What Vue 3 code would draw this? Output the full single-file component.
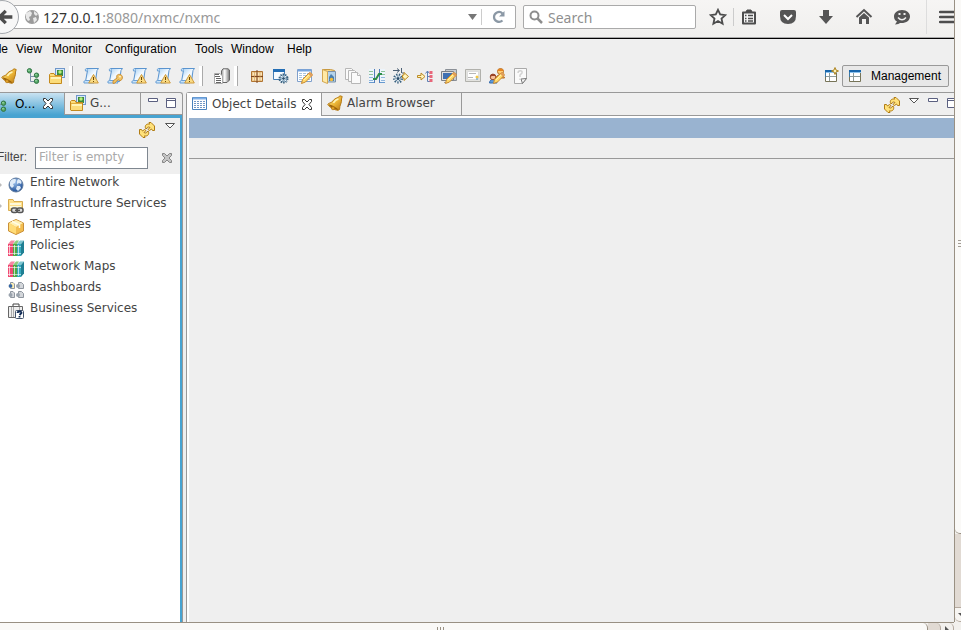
<script setup>
import { ref } from 'vue'

const address = ref('')
const filter = ref('')

const menus = ['View', 'Monitor', 'Configuration', 'Tools', 'Window', 'Help']

const toolGroups = [
  [
    { icon: 'bell', label: 'Alarms' },
    { icon: 'tree', label: 'Object browser' },
    { icon: 'folderpic', label: 'Graphs' }
  ],
  [
    { icon: 'scrollwarn', label: 'Event log' },
    { icon: 'scrollkey', label: 'Audit log' },
    { icon: 'scrollwarn', label: 'Syslog' },
    { icon: 'scrollwarn', label: 'Traps' },
    { icon: 'scrollwarn', label: 'Alarm log' }
  ],
  [{ icon: 'server', label: 'Server' }],
  [
    { icon: 'package', label: 'Packages' },
    { icon: 'windowgear', label: 'Server configuration' },
    { icon: 'tableedit', label: 'Events' },
    { icon: 'folderbook', label: 'Files' },
    { icon: 'copies', label: 'Templates' },
    { icon: 'mapping', label: 'Mapping tables' },
    { icon: 'process', label: 'Event processing' },
    { icon: 'import', label: 'Image library' },
    { icon: 'monitoredit', label: 'Object tools' },
    { icon: 'card', label: 'Certificates' },
    { icon: 'users', label: 'Users' },
    { icon: 'script', label: 'Scripts' }
  ]
]

const objects = [
  { icon: 'globe', label: 'Entire Network', expandable: true },
  { icon: 'infra', label: 'Infrastructure Services', expandable: true },
  { icon: 'box', label: 'Templates' },
  { icon: 'books', label: 'Policies' },
  { icon: 'books', label: 'Network Maps' },
  { icon: 'dash', label: 'Dashboards' },
  { icon: 'business', label: 'Business Services' }
]
</script>

<template>
  <svg class="defs" aria-hidden="true">
    <defs>
      <linearGradient id="gold" x1="0" y1="0" x2="1" y2="1">
        <stop offset="0" stop-color="#fff0a0" /><stop offset=".5" stop-color="#eeb93a" /><stop offset="1" stop-color="#b87410" />
      </linearGradient>
      <linearGradient id="paper" x1="0" y1="0" x2="1" y2="1">
        <stop offset="0" stop-color="#a5cff3" /><stop offset=".5" stop-color="#f4faff" /><stop offset="1" stop-color="#b9daf3" />
      </linearGradient>
      <linearGradient id="steel" x1="0" x2="1">
        <stop offset="0" stop-color="#999" /><stop offset=".4" stop-color="#fff" /><stop offset="1" stop-color="#777" />
      </linearGradient>
      <radialGradient id="ocean" cx=".4" cy=".3" r=".7">
        <stop offset="0" stop-color="#9fc4ee" /><stop offset="1" stop-color="#1f4f97" />
      </radialGradient>
    </defs>

    <symbol id="bell" viewBox="0 0 16 16">
      <path d="M13 .8 15.200 1.500 14.500 4 C15 8 12.500 10 12.500 14.500 L11 15.300 C7 15 2 12 .8 9.500 L1.500 8.500 C6 8 6 3.500 11 2.500Z" fill="url(#gold)" stroke="#b57a14" />
      <path d="M1.500 9.200 C4 9.500 10 12.500 11.500 14.800 C8 14.500 3 12.500 1.500 9.200Z" fill="#9a620b" />
      <path d="M6.500 8 C7.500 6 9 4.500 11.500 4" fill="none" stroke="#fff5b8" stroke-width="1.500" />
      <circle cx="6" cy="13.200" r="1.600" fill="#e0a32a" stroke="#a9690c" stroke-width=".6" />
    </symbol>
    <symbol id="tree" viewBox="0 0 16 16">
      <path d="M5.500 5V13.500H10M5.500 8.500H10" fill="none" stroke="#7d92a8" />
      <g fill="#55a868" stroke="#327545"><circle cx="4.500" cy="2.800" r="2.200" /><circle cx="11.500" cy="7.200" r="2.200" /><circle cx="11.500" cy="13.200" r="2.200" /></g>
      <g fill="#a9dfb2"><circle cx="4" cy="2.300" r=".8" /><circle cx="11" cy="6.700" r=".8" /><circle cx="11" cy="12.700" r=".8" /></g>
    </symbol>
    <symbol id="folderpic" viewBox="0 0 16 16">
      <rect x="6.500" y=".5" width="9" height="9" fill="#d7e8fa" stroke="#6f97ca" /><path d="M8 2H14V8H8Z" fill="#3b8a3b" /><circle cx="11" cy="4" r="1.700" fill="#b9f07c" />
      <path d="M.5 15V6.500L1.500 5.500H5L6 7.500H12.500V15.500H1Z" fill="#fbdc7a" stroke="#c48a1d" /><path d="M2 10H12" stroke="#fff4b7" stroke-width="2" /><path d="M1 8.500H12" stroke="#e0ad3d" />
    </symbol>
    <symbol id="sheet" viewBox="0 0 16 16">
      <path d="M3.500 .5H15.500L14 2.500 12.500 13.500H2.500L4.500 2.500Z" fill="url(#paper)" stroke="#5a94cf" />
      <path d="M3.500 .5Q1.500 1 2.500 3H4.500M2.500 12.500Q0 13 1 15H11Q9.500 13.500 11 12.500Z" fill="#c9e3f8" stroke="#6aa0d6" />
    </symbol>
    <symbol id="scrollwarn" viewBox="0 0 16 16">
      <use href="#sheet" /><path d="M10.500 6.500 15.300 15H5.700Z" fill="#f9dc86" stroke="#cf9a3c" stroke-linejoin="round" /><path d="M10.500 9V12M10.500 13V14" stroke="#704700" />
    </symbol>
    <symbol id="scrollkey" viewBox="0 0 16 16">
      <use href="#sheet" /><path d="M6 15.500 6 13 10 10 C9 7 11 6 13 6.500 16 7 16 11 14 12.300 12.500 13 11.500 12 11 11.500L8 15Z" fill="#f3c766" stroke="#c98f39" /><circle cx="13" cy="8.800" r=".8" fill="#fff" />
    </symbol>
    <symbol id="server" viewBox="0 0 16 16">
      <path d="M7.500 3 9 .8H14L15.500 2V12L13 14.500H7.500Z" fill="url(#steel)" stroke="#666" />
      <path d="M.5 5.500H6L8.500 8V15.500H.5Z" fill="#fff" stroke="#aaa" /><path d="M1 6.500H5M1 8.500H6M2 10.500H7M2 12.500H7M2 14.500H7" stroke="#666" />
    </symbol>
    <symbol id="package" viewBox="0 0 16 16">
      <path d="M2.500 3.500H13.500V13.500H2.500Z" fill="#efcd94" stroke="#b07432" /><path d="M8 2V15M2 8.500H14" stroke="#7d4520" /><path d="M4 6H7M9 6H13M4 11H7M9 11H13" stroke="#fbe6bd" stroke-width="2" /><path d="M5.500 4V13M11 4V13" stroke="#d3a05f" stroke-width=".7" />
    </symbol>
    <symbol id="windowgear" viewBox="0 0 16 16">
      <path d="M.5 1.500H11.500V11.500H.5Z" fill="#f7fbff" stroke="#477eb4" /><path d="M0 1H12V4H0Z" fill="#246eb5" />
      <circle cx="10.500" cy="10.500" r="4" fill="#9eb9cd" stroke="#39617f" stroke-dasharray="1.500 1" stroke-width="2" /><path d="M7.500 7.500 13.500 13.500M13.500 7.500 7.500 13.500" stroke="#e9f4fc" /><circle cx="10.500" cy="10.500" r="1.300" fill="#294c69" />
    </symbol>
    <symbol id="pencil" viewBox="0 0 16 16">
      <path d="M4.500 15.500 5.500 11.500 12 5 C13.500 4 16 6 15 7.500L8.500 14Z" fill="#ffd96c" stroke="#c98a30" /><path d="M7 12 12 7" stroke="#fff1ac" /><path d="M12 5 15 8" stroke="#e09a5c" stroke-width="2" />
    </symbol>
    <symbol id="tableedit" viewBox="0 0 16 16">
      <path d="M.5 1.500H14.500V13.500H.5Z" fill="#fff" stroke="#7fa0cc" /><path d="M1 2.500H14" stroke="#77a5de" stroke-width="2" /><path d="M2 5.500H13M2 7.500H13M2 9.500H13M2 11.500H13" stroke="#a9c3dd" stroke-dasharray="3 1" /><use href="#pencil" />
    </symbol>
    <symbol id="folderbook" viewBox="0 0 16 16">
      <path d="M1.500 1.500H9.500L13.500 2.500V13.500H1.500Z" fill="#f6d686" stroke="#c89941" /><path d="M6.500 3.500H14.500V14H6.500Z" fill="#b5d3ea" stroke="#7d92a8" /><path d="M1.500 1.500 6.500 3.500V15.500L1.500 13.500Z" fill="#ffe9a5" stroke="#d2a752" /><path d="M8 9 10 6 13 9V13H8Z" fill="#4a7fae" /><circle cx="10.500" cy="11.500" r="1.700" fill="#f7bd36" />
    </symbol>
    <symbol id="copies" viewBox="0 0 16 16">
      <g fill="#fafafa" stroke="#b7b7b7"><path d="M.5 .5H6.500L8.500 2.500V11.500H.5Z" /><path d="M3.500 2.500H9.500L11.500 4.500V13.500H3.500Z" /><path d="M6.500 4.500H12.500L15.500 7.500V15.500H6.500Z" /><path d="M12.500 4.500V7.500H15.500" /></g>
    </symbol>
    <symbol id="mapping" viewBox="0 0 16 16">
      <path d="M0 1H5V15H0ZM11 1H16V15H11Z" fill="#edf5fc" /><path d="M5.500 1V15M10.500 1V15" stroke="#517dba" /><path d="M0 3.500H4M0 6.500H4M12 3.500H16M12 6.500H16" stroke="#8fc39b" /><path d="M0 9.500H4M0 12.500H4M12 9.500H16M12 12.500H16" stroke="#92b7dd" /><path d="M0 14.500H5M11 14.500H16" stroke="#6799cf" /><path d="M4 11H7L10 6H13" fill="none" stroke="#2c8c49" stroke-width="2" />
    </symbol>
    <symbol id="process" viewBox="0 0 16 16">
      <path d="M0 2.500H6M4 .5 6.500 2.500 4 4.500M8.500 0V5M10 4V6" fill="none" stroke="#4c6074" /><circle cx="5" cy="10.500" r="3.500" fill="#f5fbff" stroke="#39617f" stroke-width="3" stroke-dasharray="1.200 1.200" /><circle cx="5" cy="10.500" r="1.500" fill="#294c69" /><path d="M9.500 7H11V4.500L15.500 8.500 11 12.500V10H9.500Z" fill="#fff4bd" stroke="#bc8b24" />
    </symbol>
    <symbol id="import" viewBox="0 0 16 16">
      <path d="M.5 7.500H4V5L8 8.500 4 12V9.500H.5Z" fill="#fff4bd" stroke="#bc8b24" /><path d="M10.500 3V13.500H13M8.500 5.500 10.500 3 12.500 5.500M10.500 8.500H13" fill="none" stroke="#5d82b4" /><path d="M12.500 3H15.500V6H12.500ZM12.500 7H15.500V10H12.500ZM12.500 11H15.500V14H12.500Z" fill="#e8667a" />
    </symbol>
    <symbol id="monitoredit" viewBox="0 0 16 16">
      <path d="M4.500 1.500H15.500V12.500H4.500Z" fill="#c7cbd0" stroke="#8b9097" /><path d="M.5 3.500H12.500V12.500H.5Z" fill="#e0e0e0" stroke="#7b8087" /><path d="M2 5H11V11H2Z" fill="#3f70b2" /><path d="M3 14.500H8" stroke="#999" /><use href="#pencil" />
    </symbol>
    <symbol id="card" viewBox="0 0 16 16">
      <path d="M.5 1.500H15.500V13.500H.5Z" fill="#e3e3df" stroke="#b1b1ac" /><path d="M2.500 3.500H13.500V11.500H2.500Z" fill="#fff" stroke="#ddd" /><path d="M4 5.500H11M3 9.500H8" stroke="#b7b7b7" /><circle cx="12" cy="9" r="1.500" fill="#f2c643" /><path d="M12 10V12" stroke="#4c9acc" />
    </symbol>
    <symbol id="users" viewBox="0 0 16 16">
      <path d="M7 10 C7 6 15 6 15.500 10Z" fill="#f2a445" stroke="#b46c24" /><circle cx="11.500" cy="3.500" r="3" fill="#ffcb73" stroke="#b46c24" /><path d="M8.500 3 C9 0 14 0 14.500 3Z" fill="#e78520" /><path d="M.5 15 C.5 10 8 10 8 15Z" fill="#5c9bdc" stroke="#376bab" /><circle cx="4" cy="9" r="2.800" fill="#f7bf9a" stroke="#974d28" /><path d="M1 9 C1 5 6 5 7 8L3 8Z" fill="#9b4429" /><use href="#pencil" />
    </symbol>
    <symbol id="script" viewBox="0 0 16 16">
      <path d="M1.500 .5H13.500V10.500L9.500 15.500H1.500Z" fill="#fafafa" stroke="#aaa" /><path d="M13.500 10.500 8 11 9.500 15.500Z" fill="#f5f5f5" stroke="#777" /><path d="M5 5 C5 2 10 2 9 5 L7 7V9M7 10.500V12" fill="none" stroke="#d2d2d2" stroke-width="1.500" />
    </symbol>
    <symbol id="globe" viewBox="0 0 16 16">
      <circle cx="8" cy="8" r="7" fill="url(#ocean)" stroke="#617c9e" /><path d="M2 5 C4 1 8 2 8 3L7 6 5 7 6 9 4 11 2 9ZM10 2 C14 3 14 6 13 7L11 6 9 7 9 4ZM9 9 12 9 13 11 10 14 8 12Z" fill="#e0ecf8" />
    </symbol>
    <symbol id="infra" viewBox="0 0 16 16">
      <path d="M.5 12.500V1.500H5L6 3.500H14.500V12.500Z" fill="#ffe08a" stroke="#d9ad50" /><path d="M2 6H13M2 9H13" stroke="#fff9d8" stroke-width="2" /><rect x="3.500" y="10" width="6" height="4.500" rx="2" fill="#ddd" stroke="#555" stroke-width="1.500" /><rect x="9" y="10" width="6" height="4.500" rx="2" fill="#ddd" stroke="#555" stroke-width="1.500" /><path d="M7 12.300H12" stroke="#555" stroke-width="1.500" />
    </symbol>
    <symbol id="box" viewBox="0 0 16 16">
      <path d="M8 .5 15.500 4V12L8 15.500 .5 12V4Z" fill="#f2bd50" stroke="#c99039" /><path d="M8 1 15 4 8 8 1 4Z" fill="#fff0b3" /><path d="M1 4 8 8V15L1 11.500Z" fill="#ffdc78" /><path d="M4 2.500 11.500 6V9" fill="none" stroke="#fffbe4" stroke-width="1.500" />
    </symbol>
    <symbol id="books" viewBox="0 0 16 16">
      <path d="M0 4 3 .5H7L5 4Z" fill="#f58aa4" /><path d="M0 4H5V16H0Z" fill="#f04a72" /><path d="M5 4 8 .5H11L9 4Z" fill="#8ccc7f" /><path d="M5 4H9V16H5Z" fill="#4fa843" /><path d="M9 4 12 .5H16L13 4Z" fill="#7fc6d2" /><path d="M9 4H13V16H9Z" fill="#35a9bd" /><path d="M13 4 16 .5V12.500L13 16Z" fill="#1f7f93" />
      <path d="M1.500 5V15M6.500 5V15M10.500 5V15" stroke="#fff" opacity=".65" /><path d="M0 6.500H13M0 13.500H13" stroke="#fff" opacity=".6" />
    </symbol>
    <symbol id="dash" viewBox="0 0 16 16">
      <g fill="#d3d6da" stroke="#8f969f"><path d="M2.500 .5H5L6.500 2V6.500H2.500ZM10.500 .5H13.500L15.500 2.500V6.500H10.500ZM2.500 9.500H5L6.500 11V15.500H2.500ZM10.500 9.500H13.500L15.500 11.500V15.500H10.500Z" /></g>
      <path d="M3 1H5L6 2.500V6H3Z" fill="#fff1b5" />
      <g fill="#9aa3ad"><circle cx="2.500" cy="4" r="2" /><circle cx="10" cy="4" r="2" /><circle cx="2.500" cy="13" r="2" /><circle cx="10" cy="13" r="2" /></g><circle cx="2.500" cy="4" r="1.700" fill="#3266a7" />
    </symbol>
    <symbol id="business" viewBox="0 0 16 16">
      <path d="M5 3V1H11V3" fill="none" stroke="#444" /><path d="M.5 3.500H14.500V14.500H.5Z" fill="#eee" stroke="#666" /><path d="M3.500 4V14M5.500 4V14M11.500 4V8" stroke="#aaa" /><rect x="7.500" y="7.500" width="8" height="8" rx="1" fill="#fff" stroke="#44546c" /><path d="M9.500 10 C9.500 8 14 8 13.500 10L11.500 12M11.500 13V14.500" fill="none" stroke="#122d58" stroke-width="1.800" />
    </symbol>
    <symbol id="details" viewBox="0 0 16 16">
      <path d="M.5 1.500H14.500V13.500H.5Z" fill="#fff" stroke="#4b83bd" /><path d="M1 2.500H14" stroke="#80b0e8" stroke-width="2" /><path d="M2 5.500H13M2 7.500H13M2 9.500H13M2 11.500H13" stroke="#7297c4" stroke-dasharray="2 1" />
    </symbol>
    <symbol id="refresh" viewBox="0 0 16 16">
      <path id="swirl" d="M6.500 6.500 C5.500 3 8 1.500 10.500 2.200L10 .5H12L15.500 4V8.500L13.500 8.500 12.500 7 10.500 8.500 9 7.500 11 5.500 C9.500 4.500 8 5 8 6.500Z" fill="#ffe27b" stroke="#b17c14" />
      <use href="#swirl" transform="rotate(180 8 8)" />
    </symbol>
    <symbol id="perspective" viewBox="0 0 14 14">
      <path d="M1.500 1.500H12.500V12.500H1.500Z" fill="#fff" stroke="#777458" /><path d="M1 2H13" stroke="#1766ad" stroke-width="2" /><path d="M1 3.500H13" stroke="#8fc3ee" /><path d="M5.500 4V12M1.500 7.500H12" stroke="#8e9b9b" /><path d="M1.500 3V8" stroke="#3d79a6" />
    </symbol>
    <symbol id="close" viewBox="0 0 12 12">
      <path d="M1.500 .5H3.500L6 3 8.500 .5H10.500V2.500L8 5.500 10.500 8.500V10.500H8.500L6 8 3.500 10.500H1.500V8.500L4 5.500 1.500 2.500Z" fill="#fff" stroke="currentColor" />
    </symbol>
    <symbol id="chevron" viewBox="0 0 10 6"><path d="M.5 .5H9.500L5 5Z" fill="#fff" stroke="#555" /></symbol>
    <symbol id="minimize" viewBox="0 0 10 4"><path d="M.5 .5H9.500V3.500H.5Z" fill="#fff" stroke="#5b6080" /></symbol>
    <symbol id="maximize" viewBox="0 0 10 10"><path d="M.5 .5H9.500V9.500H.5ZM.5 2.500H9.500" fill="#fff" stroke="#5b6080" /></symbol>
  </svg>

  <div class="page">
    <div class="main">
      <header class="browser">
        <button class="back" aria-label="Back"><svg viewBox="0 0 34 34"><path d="M28 17H15M21 10.500 14.500 17 21 23.500" fill="none" stroke="#4d4d4d" stroke-width="3.500" /></svg></button>
        <div class="address">
          <svg class="world" viewBox="0 0 16 16"><circle cx="8" cy="8" r="7" fill="#9b9b9b" /><path d="M2 4 6 2 8 4 7 7 5 8 6 11 4 12 2 9ZM10 2 14 5 12 7 10 5ZM9 9 12 8 13 11 10 14Z" fill="#e9e9e9" /></svg>
          <a class="url" href="#"><b>127.0.0.1</b>:8080/nxmc/nxmc</a>
          <button class="drop" aria-label="History"><svg width="9" height="6" viewBox="0 0 9 6"><path d="M0 0H9L4.500 6Z" fill="#777" /></svg></button>
          <button class="reload" aria-label="Reload"><svg width="14" height="14" viewBox="0 0 14 14"><path d="M10.500 3.500 C7 0 2 3 2 7 2 11 7 13.500 10.500 10.500" fill="none" stroke="#8b98a5" stroke-width="2.200" /><path d="M12.500 1V6.500H7Z" fill="#8b98a5" /></svg></button>
        </div>
        <label class="search">
          <svg width="14" height="14" viewBox="0 0 14 14"><circle cx="5.500" cy="5.500" r="4" fill="none" stroke="#8d8d8d" stroke-width="2" /><path d="M8.500 8.500 13 13" stroke="#8d8d8d" stroke-width="2.500" /></svg>
          <input v-model="address" type="text" placeholder="Search" aria-label="Search">
        </label>
        <nav class="actions" aria-label="Browser tools">
          <button class="star" aria-label="Bookmark"><svg viewBox="0 0 18 18"><path d="M9 1.800 11.200 6.500 16.300 7.100 12.500 10.500 13.600 15.700 9 13 4.400 15.700 5.500 10.500 1.700 7.100 6.800 6.500Z" fill="#f8f8f8" stroke="#4d4d4d" stroke-width="1.800" /></svg></button>
          <button class="list" aria-label="Bookmarks list"><svg viewBox="0 0 18 18"><path d="M3 4.500H15V15.500H3Z" fill="#f6f6f6" stroke="#4d4d4d" stroke-width="2" stroke-linejoin="round" /><path d="M6 4 7 2H11L12 4Z" fill="#4d4d4d" stroke="#4d4d4d" /><path d="M5 7.500H6.500M8 7.500H13M5 10.500H6.500M8 10.500H13M5 13H6.500M8 13H13" fill="none" stroke="#4d4d4d" stroke-width="1.300" /></svg></button>
          <button aria-label="Pocket"><svg viewBox="0 0 18 18"><path d="M1 4Q1 2 3 2H15Q17 2 17 4V8Q17 16 9 16 1 16 1 8Z" fill="#555" /><path d="M5 7 9 11 13 7" fill="none" stroke="#fff" stroke-width="2" /></svg></button>
          <button aria-label="Downloads"><svg viewBox="0 0 18 18"><path d="M6 2H12V8H16L9 16 2 8H6Z" fill="#555" /></svg></button>
          <button aria-label="Home"><svg viewBox="0 0 18 18"><path d="M1.500 9 9 2 16.500 9" fill="none" stroke="#555" stroke-width="2" /><path d="M4 9.500 9 5 14 9.500V16H11V11H7V16H4Z" fill="#555" /></svg></button>
          <button aria-label="Chat"><svg viewBox="0 0 18 18"><path d="M9 2C4 2 1 5 1 8.500 1 11 2 12.500 4 13.500L2 16.500C5 16.500 6 15.500 7 15 13 15.500 17 12.500 17 8.500 17 5 14 2 9 2Z" fill="#555" /><path d="M5 9.500Q9 14 13 9.500" fill="none" stroke="#eee" stroke-width="1.500" /><path d="M5.500 6H7.500M10.500 6H12.500" stroke="#eee" stroke-width="2" /></svg></button>
          <button class="burger" aria-label="Menu"><svg viewBox="0 0 18 18"><path d="M1 4H17M1 9H17M1 14H17" stroke="#4d4d4d" stroke-width="2.500" stroke-linecap="round" /></svg></button>
        </nav>
      </header>

      <nav class="menubar" aria-label="Application menu">
        <button class="file">File</button>
        <button v-for="m in menus" :key="m">{{ m }}</button>
      </nav>

      <div class="toolbar">
        <div class="tools">
          <div v-for="(g, gi) in toolGroups" :key="gi" class="group">
            <button v-for="(t, ti) in g" :key="ti" :aria-label="t.label"><svg class="icon"><use :href="'#' + t.icon" /></svg></button>
          </div>
        </div>
        <button class="open" aria-label="Open perspective"><svg class="small"><use href="#perspective" /></svg><svg class="spark" viewBox="0 0 8 8"><path d="M4 .5 5 3 7.500 4 5 5 4 7.500 3 5 .5 4 3 3Z" fill="#fff3b4" stroke="#ad8422" /></svg></button>
        <button class="manage"><svg class="small"><use href="#perspective" /></svg>Management</button>
      </div>

      <div class="workbench">
        <aside class="side">
          <div class="tabs">
            <button class="tab active"><svg class="icon"><use href="#tree" /></svg>O...<svg class="x"><use href="#close" /></svg></button>
            <button class="tab second"><svg class="icon"><use href="#folderpic" /></svg>G...</button>
            <div class="controls">
              <button aria-label="Minimize"><svg class="min"><use href="#minimize" /></svg></button>
              <button aria-label="Maximize"><svg class="max"><use href="#maximize" /></svg></button>
            </div>
          </div>
          <div class="sidebody">
            <div class="viewbar">
              <button aria-label="Refresh"><svg class="icon"><use href="#refresh" /></svg></button>
              <button aria-label="View menu"><svg class="chev"><use href="#chevron" /></svg></button>
            </div>
            <div class="filter">
              <label for="filter">Filter:</label>
              <input id="filter" v-model="filter" type="text" placeholder="Filter is empty">
              <button aria-label="Close filter"><svg width="12" height="12" viewBox="0 0 12 12"><path d="M1.500 1.500H3.500L6 4 8.500 1.500H10.500V3.500L8 6 10.500 8.500V10.500H8.500L6 8 3.500 10.500H1.500V8.500L4 6 1.500 3.500Z" fill="#c4c4c4" stroke="#858585" /></svg></button>
            </div>
            <ul class="objects">
              <li v-for="o in objects" :key="o.label">
                <svg class="arrow" viewBox="0 0 4 6"><path v-if="o.expandable" d="M0 1 2 3 0 5Z" fill="#bbb" /></svg>
                <svg class="icon"><use :href="'#' + o.icon" /></svg>
                <span>{{ o.label }}</span>
              </li>
            </ul>
          </div>
        </aside>

        <section class="editor">
          <div class="tabs">
            <button class="tab current"><svg class="icon"><use href="#details" /></svg>Object Details<svg class="x"><use href="#close" /></svg></button>
            <button class="tab alarm"><svg class="icon"><use href="#bell" /></svg>Alarm Browser</button>
            <div class="controls">
              <button aria-label="Refresh details"><svg class="icon"><use href="#refresh" /></svg></button>
              <button aria-label="Details menu"><svg class="chev"><use href="#chevron" /></svg></button>
              <button aria-label="Minimize details"><svg class="min"><use href="#minimize" /></svg></button>
              <button aria-label="Maximize details"><svg class="max"><use href="#maximize" /></svg></button>
            </div>
          </div>
          <div class="content">
            <div class="title" />
            <div class="strip" />
          </div>
        </section>
      </div>
    </div>

    <div class="vscroll" aria-hidden="true">
      <div class="vthumb"><i /><i /><i /></div>
      <div class="vtrack" />
      <div class="vdown"><svg width="6" height="4" viewBox="0 0 6 4"><path d="M0 0H8L4 4Z" fill="#555" /></svg></div>
    </div>
    <div class="hscroll" aria-hidden="true">
      <div class="hthumb"><i /><i /><i /></div>
      <div class="htrack" />
      <div class="hright"><svg width="4" height="6" viewBox="0 0 4 6"><path d="M0 0 4 4 0 8Z" fill="#555" /></svg></div>
    </div>
    <div class="corner" />
  </div>
</template>

<style>
html, body { overflow: hidden; }
</style>

<style scoped>
.defs { position: absolute; width: 0; height: 0; }
* { box-sizing: border-box; }
button, input { margin: 0; padding: 0; border: 0; background: none; font: inherit; color: inherit; outline: none; }
svg { display: block; flex: none; }
button { display: flex; align-items: center; white-space: nowrap; flex: none; }
.icon { width: 16px; height: 16px; }
.small { width: 14px; height: 14px; }
.x { width: 12px; height: 12px; color: #333; }
.chev { width: 10px; height: 6px; }
.min { width: 10px; height: 4px; }
.max { width: 10px; height: 10px; }

.page { display: grid; grid-template-columns: minmax(0, 1fr) 7px; grid-template-rows: minmax(0, 1fr) 8px; height: 100vh; background: #efefef; font: 12px/16px "DejaVu Sans", sans-serif; color: #444; }
.main { display: flex; flex-direction: column; min-width: 0; overflow: hidden; grid-row: 1; }

.browser { display: flex; align-items: center; height: 39px; padding-bottom: 4px; flex: none; background: linear-gradient(#f6f5f4, #f0efed); border-bottom: 1px solid #000; box-shadow: inset 0 -1px #aaa; font: 14px/20px "Noto Sans", sans-serif; }
.back { width: 34px; height: 34px; margin-left: -15px; border: 1px solid #a4a8ad; border-radius: 50%; background: #f7f7f7; z-index: 1; }
.back svg { width: 32px; height: 32px; }
.address { flex: 1; min-width: 0; display: flex; align-items: center; height: 24px; margin-left: -8px; padding-left: 12px; background: #fff; border: 1px solid #aaa; border-radius: 2px; }
.world { width: 16px; height: 16px; }
.url { flex: 1; margin-left: 3px; padding-top: 2px; color: #999; text-decoration: none; white-space: nowrap; overflow: hidden; }
.url b { font-weight: 400; color: #333; }
.drop { width: 18px; justify-content: center; height: 16px; }
.reload { width: 34px; height: 16px; justify-content: center; border-left: 1px solid #ccc; }
.search { display: flex; align-items: center; gap: 5px; width: 173px; height: 24px; margin-left: 7px; padding: 0 5px; background: #fff; border: 1px solid #aaa; border-radius: 2px; }
.search input { width: 100%; min-width: 0; padding-top: 2px; color: #333; }
.search input::placeholder { color: #8f8f8f; opacity: 1; }
.actions { display: flex; align-items: center; padding-left: 7px; }
.actions button { width: 38px; height: 34px; justify-content: center; }
.actions svg { width: 18px; height: 18px; }
.actions .star { width: 31px; height: 18px; border-right: 1px solid #ccc; }
.actions .list { width: 30px; margin-right: 5px; }
.actions .burger { width: 34px; margin-left: 5px; margin-right: -6px; border-left: 1px solid #ddd; padding-left: 8px; }

.menubar { display: grid; grid-template-columns: 16px 36px 53px 90px 36px 56px auto; justify-content: start; height: 20px; flex: none; font: 12px/20px "Liberation Sans", sans-serif; color: #000; }
.menubar .file { justify-self: end; margin-right: 8px; }
.toolbar { display: flex; align-items: center; height: 33px; flex: none; padding-right: 5px; }
.tools { display: flex; flex: 1; min-width: 0; margin-left: -3px; }
.group { display: flex; }
.group + .group::before { content: ""; width: 3px; height: 20px; margin: 0 6px 0 0; background: #fff; border-right: 1px solid #aaa; }
.group button { width: 24px; height: 20px; justify-content: center; }
.group:nth-child(n + 3)::before { margin-right: 7px; }
.open { position: relative; margin-right: 4px; }
.spark { position: absolute; width: 8px; height: 8px; right: -1px; top: -2px; }
.manage { height: 22px; padding: 0 5px; gap: 9px; border: 1px solid #999; border-radius: 2px; background: #e8e8e8; font: 12px/16px "Liberation Sans", sans-serif; color: #000; width: 107px; }

.workbench { display: flex; flex: 1; min-height: 0; }
.side { display: flex; flex-direction: column; width: 183px; flex: none; border-top: 1px solid #999; border-right: 1px solid #999; border-top-right-radius: 3px; }
.tabs { display: flex; height: 22px; flex: none; }
.tab { height: 22px; border-right: 1px solid #999; padding-bottom: 2px; gap: 4px; }
.side .tab.active { gap: 7px; margin-left: -8px; width: 73px; color: #000; background: linear-gradient(#c9e2f1, #47a3d1); padding-bottom: 0; }
.side .second { width: 76px; padding-left: 5px; border-bottom: 1px solid #999; }
.controls { display: flex; flex: 1; gap: 8px; align-items: flex-start; justify-content: flex-end; padding: 5px 6px 0 0; }
.side .controls { border-bottom: 1px solid #999; }
.sidebody { display: flex; flex-direction: column; flex: 1; min-height: 0; border-top: 3px solid #47a3d1; border-right: 2px solid #47a3d1; }
.viewbar { display: flex; align-items: flex-start; justify-content: flex-end; gap: 10px; height: 27px; padding: 5px 5px 0 0; flex: none; }
.viewbar .icon, .editor .controls .icon { margin-top: -1px; }
.filter { display: flex; align-items: flex-start; height: 29px; padding: 2px 8px 0 0; flex: none; }
.filter label { width: 35px; margin-left: -3px; padding-top: 2px; font-family: "Liberation Sans", sans-serif; }
.filter input { flex: 1; min-width: 0; height: 22px; margin: 0 13px 0 3px; padding: 0 3px 2px; border: 1px solid #7f8790; background: #fff; }
.filter button { padding-top: 5px; margin-right: -1px; }
.filter input::placeholder { color: #aaa; opacity: 1; }
.objects { flex: 1; margin: 0; padding: 0; background: #fff; list-style: none; }
.objects li { display: flex; align-items: flex-start; height: 21px; }
.objects .icon { margin: 3px 6px 0 4px; }
.objects span { white-space: nowrap; }
.arrow { width: 4px; height: 6px; margin-top: 8px; }

.editor { display: flex; flex-direction: column; flex: 1; min-width: 0; margin-left: 3px; border-top: 1px solid #999; border-left: 1px solid #999; border-top-left-radius: 3px; }
.editor .tabs { height: 23px; }
.editor .current { height: 24px; width: 135px; padding: 0 0 2px 5px; background: #fff; gap: 4px; }
.editor .current .x { margin-top: 2px; }
.editor .alarm { height: 23px; width: 140px; padding-left: 5px; border-bottom: 1px solid #999; }
.editor .controls { padding: 5px 0 0; margin-right: -3px; gap: 9px; border-bottom: 1px solid #999; }
.content { flex: 1; border-left: 2px solid #fff; border-top: 2px solid #fff; }
.title { height: 20px; background: #99b3d0; }
.strip { height: 21px; border-bottom: 1px solid #999; }

.vscroll { display: flex; flex-direction: column; border-left: 1px solid #999083; background: #f2f0ed; overflow: hidden; }
.vthumb { display: flex; flex-direction: column; align-items: flex-end; justify-content: center; gap: 2px; flex: 1; padding-bottom: 46px; background: #faf9f7; border-bottom: 1px solid #999083; border-bottom-left-radius: 5px; }
.vthumb i { width: 3px; height: 1px; background: #a29c94; }
.vtrack { height: 74px; background: #e1dad3; border-bottom: 1px solid #b5aaa0; }
.vdown { height: 14px; padding: 5px 0 0 3px; border-bottom: 1px solid #b5aaa0; border-bottom-left-radius: 5px; background: #f7f5f2; }
.hscroll { display: flex; min-width: 0; border-top: 1px solid #999083; background: #f2f0ed; overflow: hidden; }
.hthumb { display: flex; justify-content: center; gap: 2px; flex: 1; padding: 4px 46px 0 0; background: #faf9f7; border-right: 1px solid #999083; border-top-right-radius: 5px; }
.hthumb i { width: 1px; height: 4px; background: #999083; }
.htrack { width: 13px; background: #e1dad3; border-right: 1px solid #b5aaa0; border-top-right-radius: 5px; }
.hright { width: 13px; padding: 3px 0 0 4px; border-right: 1px solid #b5aaa0; border-top-right-radius: 5px; }
.corner { background: #f2f0ed; }
</style>
